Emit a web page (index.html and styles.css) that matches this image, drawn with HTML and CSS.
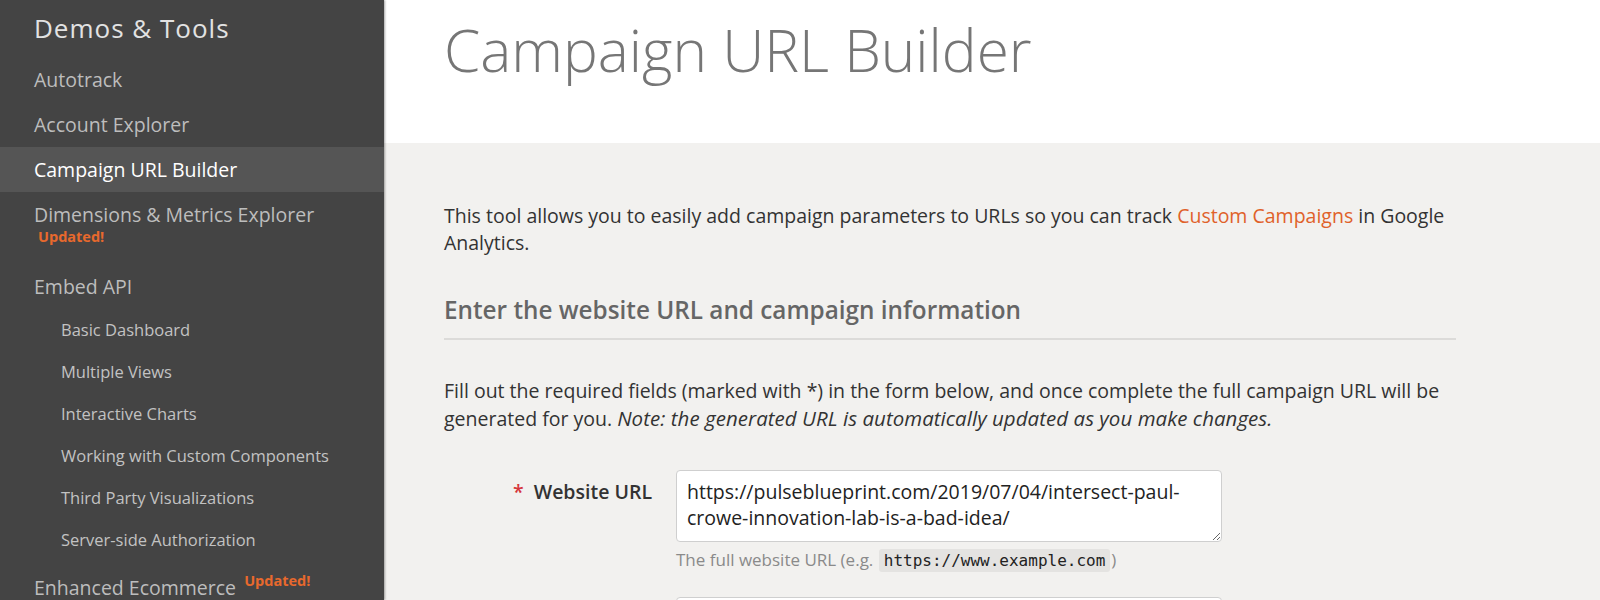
FILE: index.html
```html
<!DOCTYPE html>
<html lang="en">
<head>
<meta charset="utf-8">
<title>Campaign URL Builder</title>
<link rel="stylesheet" href="styles.css">
</head>
<body>
<div class="app">
  <nav class="sidebar">
    <div class="side-title">Demos &amp; Tools</div>
    <ul class="nav">
      <li class="nav-item">Autotrack</li>
      <li class="nav-item">Account Explorer</li>
      <li class="nav-item active">Campaign URL Builder</li>
      <li class="nav-item with-badge">Dimensions &amp; Metrics Explorer<span class="badge badge-block">Updated!</span></li>
      <li class="nav-item">Embed API</li>
      <li class="nav-sub">Basic Dashboard</li>
      <li class="nav-sub">Multiple Views</li>
      <li class="nav-sub">Interactive Charts</li>
      <li class="nav-sub">Working with Custom Components</li>
      <li class="nav-sub">Third Party Visualizations</li>
      <li class="nav-sub">Server-side Authorization</li>
      <li class="nav-item last">Enhanced Ecommerce <sup class="badge">Updated!</sup></li>
    </ul>
  </nav>
  <main class="main">
    <header class="page-header">
      <h1 class="page-title">Campaign URL Builder</h1>
    </header>
    <section class="content">
      <p class="intro">This tool allows you to easily add campaign parameters to URLs so you can track <a class="link" href="#">Custom Campaigns</a> in Google Analytics.</p>
      <h2 class="section-title">Enter the website URL and campaign information</h2>
      <p class="instructions">Fill out the required fields (marked with *) in the form below, and once complete the full campaign URL will be generated for you. <em class="note">Note: the generated URL is automatically updated as you make changes.</em></p>
      <div class="form-row first-row">
        <label class="field-label"><span class="req">*</span>Website URL</label>
        <div class="field">
          <textarea class="url-input" rows="2">https://pulseblueprint.com/2019/07/04/intersect-paul-crowe-innovation-lab-is-a-bad-idea/</textarea>
          <div class="help">The full website URL (e.g. <code class="code">https://www.example.com</code>)</div>
        </div>
      </div>
      <div class="form-row">
        <span class="field-label"></span>
        <div class="field">
          <input class="text-input" type="text">
        </div>
      </div>
    </section>
  </main>
</div>
</body>
</html>
```
FILE: styles.css
```css
* { box-sizing: border-box; }
html, body { margin: 0; padding: 0; height: 100%; overflow: hidden; }
body {
  font-family: "Open Sans", "Noto Sans", sans-serif;
  background: #f2f1ef;
  color: #333;
}
.app { display: flex; height: 600px; overflow: hidden; }

.sidebar {
  width: 384px;
  flex: 0 0 384px;
  background: #444444;
  box-shadow: 1px 0 2px rgba(0,0,0,0.35);
  position: relative;
  z-index: 2;
  color: #bcbcbc;
  overflow: hidden;
}
.side-title {
  height: 57px;
  padding: 10px 0 0 34px;
  font-size: 26px;
  line-height: 36px;
  letter-spacing: 1px;
  color: #e2e2e2;
}
.nav { list-style: none; margin: 0; padding: 0; }
.nav-item {
  height: 45px;
  line-height: 45px;
  padding-left: 34px;
  font-size: 19.5px;
  color: #bdbdbd;
  white-space: nowrap;
}
.nav-item.active { background: #555555; color: #fff; }
.nav-item.with-badge {
  height: 72px;
  line-height: 24px;
  padding-top: 11px;
}
.nav-item.last { margin-top: 4px; }
.nav-sub {
  height: 42px;
  line-height: 42px;
  padding-left: 61px;
  font-size: 16.5px;
  color: #c2c2c2;
}
.badge {
  color: #e8692d;
  font-weight: 700;
  font-size: 14.5px;
}
.badge-block { display: block; padding-left: 4px; line-height: 20px; }
sup.badge { vertical-align: top; position: relative; top: -7px; margin-left: 3px; }

.main { flex: 1; display: flex; flex-direction: column; min-width: 0; overflow: hidden; }
.page-header {
  height: 143px;
  flex: 0 0 143px;
  background: #fff;
  padding-left: 60px;
}
.page-title {
  margin: 0;
  padding-top: 8px;
  font-weight: 300;
  font-size: 58.5px;
  line-height: 82px;
  color: #767676;
}
.content {
  padding-left: 60px;
  width: 1072px;
}
.intro, .instructions {
  margin: 0;
  font-size: 19.5px;
  line-height: 26.5px;
  color: #333;
}
.intro { margin-top: 60px; }
.link { color: #e0612a; text-decoration: none; }
.section-title {
  margin: 38px 0 0;
  font-size: 24.3px;
  font-weight: 600;
  color: #666;
  line-height: 32px;
  padding-bottom: 12px;
  border-bottom: 2px solid #dcdbd9;
}
.instructions { margin-top: 38px; }
.note { font-style: italic; font-size: 1.05em; letter-spacing: 0.05px; }

.form-row {
  display: grid;
  grid-template-columns: 208px 546px;
  column-gap: 24px;
}
.first-row { margin-top: 38px; }
.field-label {
  text-align: right;
  font-weight: 600;
  font-size: 19.5px;
  line-height: 26px;
  padding-top: 9px;
  color: #333;
}
.req { color: #d6363b; margin-right: 10px; }
.url-input {
  display: block;
  width: 546px;
  height: 72px;
  padding: 8px 10px;
  border: 1px solid #cfcfcf;
  border-radius: 4px;
  background: #fff;
  font-family: "Open Sans", "Noto Sans", sans-serif;
  font-size: 19.5px;
  line-height: 26px;
  color: #222;
  resize: vertical;
  overflow: hidden;
}
.help {
  margin-top: 6px;
  font-size: 17px;
  line-height: 24px;
  color: #8a8a8a;
}
.code {
  font-family: "DejaVu Sans Mono", "Liberation Mono", monospace;
  font-size: 16px;
  color: #222;
  background: #e4e3e1;
  padding: 2px 5px;
  border-radius: 3px;
  margin: 0 1px;
}
.text-input {
  display: block;
  width: 546px;
  height: 44px;
  margin-top: 24px;
  border: 1px solid #cfcfcf;
  border-radius: 4px;
  background: #fff;
}
```
